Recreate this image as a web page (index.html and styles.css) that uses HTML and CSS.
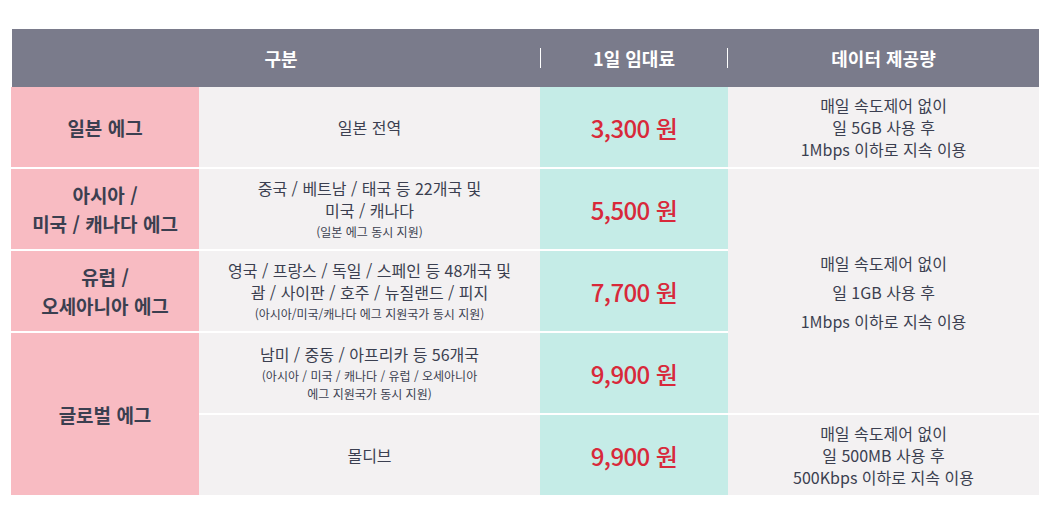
FILE: index.html
```html
<!DOCTYPE html>
<html lang="ko">
<head>
<meta charset="utf-8">
<link rel="stylesheet" href="styles.css">
</head>
<body>
<div class="wrap">
  <div class="head">
    <div class="hcell h-kind">구분</div>
    <span class="hdiv"></span>
    <div class="hcell h-price">1일 임대료</div>
    <span class="hdiv"></span>
    <div class="hcell h-data">데이터 제공량</div>
  </div>
  <div class="grid">
    <div class="cell name r1">일본 에그</div>
    <div class="cell area r1">일본 전역</div>
    <div class="cell price r1">3,300 원</div>
    <div class="cell data r1">매일 속도제어 없이<br>일 5GB 사용 후<br>1Mbps 이하로 지속 이용</div>

    <div class="cell name r2 tall">아시아 /<br>미국 / 캐나다 에그</div>
    <div class="cell area r2"><p>중국 / 베트남 / 태국 등 22개국 및<br>미국 / 캐나다</p><p class="sub">(일본 에그 동시 지원)</p></div>
    <div class="cell price r2">5,500 원</div>
    <div class="cell data r2 span3 wide">매일 속도제어 없이<br>일 1GB 사용 후<br>1Mbps 이하로 지속 이용</div>

    <div class="cell name r3 tall">유럽 /<br>오세아니아 에그</div>
    <div class="cell area r3"><p>영국 / 프랑스 / 독일 / 스페인 등 48개국 및<br>괌 / 사이판 / 호주 / 뉴질랜드 / 피지</p><p class="sub">(아시아/미국/캐나다 에그 지원국가 동시 지원)</p></div>
    <div class="cell price r3">7,700 원</div>

    <div class="cell name r4 span2">글로벌 에그</div>
    <div class="cell area r4"><p>남미 / 중동 / 아프리카 등 56개국</p><p class="sub">(아시아 / 미국 / 캐나다 / 유럽 / 오세아니아<br>에그 지원국가 동시 지원)</p></div>
    <div class="cell price r4">9,900 원</div>

    <div class="cell area r5">몰디브</div>
    <div class="cell price r5">9,900 원</div>
    <div class="cell data r5">매일 속도제어 없이<br>일 500MB 사용 후<br>500Kbps 이하로 지속 이용</div>
  </div>
</div>
</body>
</html>
```
FILE: styles.css
```css
html, body {
  margin: 0;
  padding: 0;
  background: #ffffff;
}
body {
  font-family: "Noto Sans CJK KR", "Noto Sans", sans-serif;
  color: #3b3f50;
}
.wrap {
  width: 1028px;
  margin: 29px 0 0 11px;
}
.head {
  display: flex;
  align-items: center;
  height: 58px;
  margin-left: 1px;
  background: #7a7b8b;
  color: #ffffff;
  font-size: 18px;
  font-weight: 700;
}
.hcell {
  text-align: center;
}
.h-kind {
  width: 528px;
  box-sizing: border-box;
  padding-left: 10px;
}
.h-price {
  width: 186px;
}
.h-data {
  width: 311px;
}
.hdiv {
  width: 1px;
  height: 20px;
  background: #ffffff;
}
.grid {
  display: grid;
  grid-template-columns: 188px 341px 188px 311px;
  grid-template-rows: repeat(5, 80px);
  row-gap: 2px;
}
.cell {
  display: flex;
  flex-direction: column;
  align-items: center;
  justify-content: center;
  text-align: center;
}
.cell p {
  margin: 0;
}
.name {
  grid-column: 1;
  background: #f8bbc2;
  font-size: 19px;
  font-weight: 700;
  line-height: 29px;
}
.area {
  grid-column: 2;
  background: #f3f1f2;
  font-size: 16px;
  line-height: 22px;
}
.area .sub {
  font-size: 12px;
  line-height: 18px;
  margin-top: 2px;
}
.price {
  grid-column: 3;
  background: #c5ece7;
  color: #d8293a;
  font-size: 24px;
  font-weight: 500;
  letter-spacing: -0.6px;
}
.data {
  grid-column: 4;
  background: #f3f1f2;
  font-size: 16px;
  line-height: 22px;
}
.data.wide {
  line-height: 29px;
  padding-top: 2px;
  box-sizing: border-box;
}
.r1 { grid-row: 1; }
.r2 { grid-row: 2; }
.r3 { grid-row: 3; }
.r4 { grid-row: 4; }
.r5 { grid-row: 5; }
.span2 { grid-row: 4 / span 2; }
.span3 { grid-row: 2 / span 3; }
```
